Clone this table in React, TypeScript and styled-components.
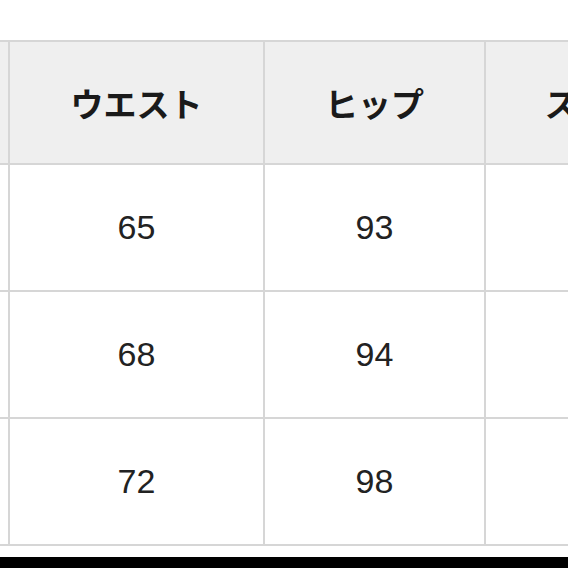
import { createGlobalStyle } from 'styled-components'
import styled from 'styled-components'

// only the waist and hip columns fall fully inside the view
const sizes = [
	{ id: 's', waist: 65, hip: 93 },
	{ id: 'm', waist: 68, hip: 94 },
	{ id: 'l', waist: 72, hip: 98 },
]

const headers = ['', 'ウエスト', 'ヒップ', 'スカート丈']

export default function App() {
	return (
		<>
			<GlobalStyle />
			<Page>
				<SizeTable>
					{headers.map((title, i) => (
						<HeadCell key={i}>{title}</HeadCell>
					))}
					{sizes.map(row => (
						<Row key={row.id} waist={row.waist} hip={row.hip} />
					))}
				</SizeTable>
				<BottomBar />
			</Page>
		</>
	)
}

const Row = ({ waist, hip }: { waist: number; hip: number }) => (
	<>
		<Cell />
		<Cell>{waist}</Cell>
		<Cell>{hip}</Cell>
		<Cell />
	</>
)

const GlobalStyle = createGlobalStyle`
	html, body {
		margin: 0;
		padding: 0;
		overflow: hidden;
		background: #ffffff;
	}
`

const Page = styled.div`
	display: flex;
	flex-direction: column;
	width: 568px;
	height: 568px;
	overflow: hidden;
	background: #ffffff;
`

const SizeTable = styled.div`
	display: grid;
	grid-template-columns: 200px 253px 219px 282px;
	grid-template-rows: 121px 125px 125px 125px;
	gap: 2px;
	padding: 2px;
	margin: 40px 0 0 -194px;
	width: max-content;
	background: #d6d6d6;
`

const Cell = styled.div`
	display: flex;
	align-items: center;
	justify-content: center;
	background: #ffffff;
	color: #222222;
	font-family: 'Liberation Sans', Arial, sans-serif;
	font-size: 34px;
`

const HeadCell = styled(Cell)`
	background: #efefef;
	color: #1a1a1a;
	font-family: 'Noto Sans CJK JP', 'Noto Sans', sans-serif;
	font-weight: 700;
	font-size: 33px;
`

const BottomBar = styled.div`
	margin-top: 11px;
	height: 20px;
	background: #000000;
	flex-shrink: 0;
`
